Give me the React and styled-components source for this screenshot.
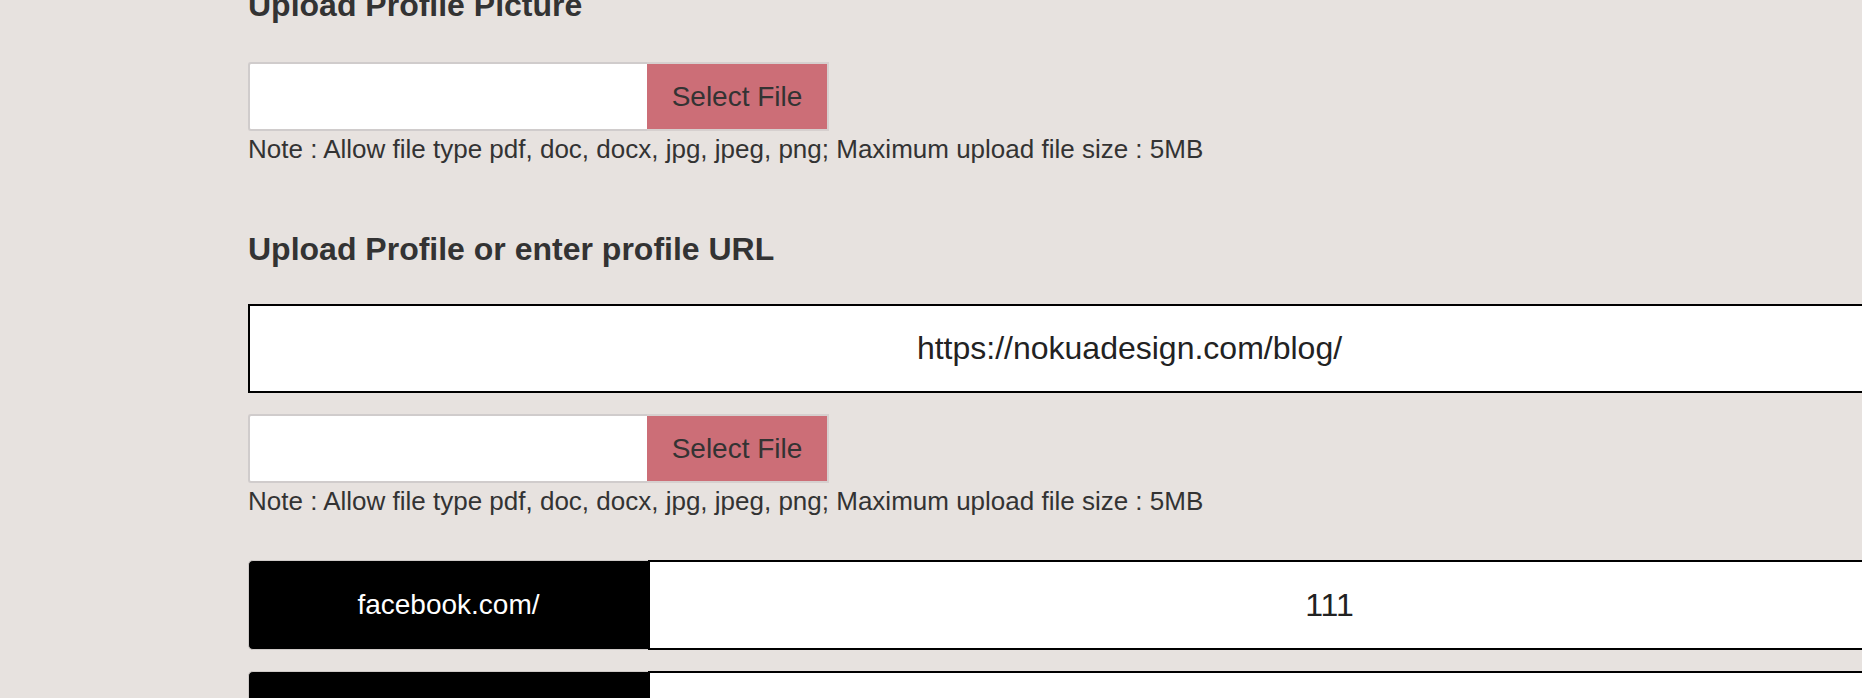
import React from 'react';
import styled, { createGlobalStyle } from 'styled-components';

const GlobalStyle = createGlobalStyle`
  html, body {
    margin: 0;
    padding: 0;
    overflow: hidden;
    background: #e7e2df;
    font-family: "Liberation Sans", Arial, Helvetica, sans-serif;
    color: #333;
  }
`;

const Page = styled.div`
  width: 1763px;
  margin: -15px 0 0 248px;
`;

const Section = styled.section`
  margin-bottom: ${(p) => p.$gap || 0}px;
`;

const Heading = styled.h3`
  margin: 0 0 ${(p) => p.$mb || 37}px;
  font-size: 32px;
  line-height: 40px;
  font-weight: bold;
  color: #333;
`;

const FileRow = styled.div`
  display: flex;
  height: 69px;
`;

const PathBox = styled.input`
  box-sizing: border-box;
  width: 399px;
  height: 100%;
  margin: 0;
  border: 2px solid #d0cccc;
  border-right: none;
  border-radius: 3px 0 0 3px;
  background: #fff;
  outline: none;
`;

const SelectButton = styled.button`
  box-sizing: border-box;
  width: 182px;
  height: 100%;
  margin: 0;
  border: 2px solid #d6d0cf;
  border-left: none;
  background: #cc6e77;
  color: #333;
  font-family: inherit;
  font-size: 28px;
  padding: 0;
`;

const Note = styled.p`
  margin: 3px 0 0;
  font-size: 26px;
  line-height: 30px;
  color: #333;
`;

const UrlInput = styled.input`
  box-sizing: border-box;
  display: block;
  width: 100%;
  height: 89px;
  margin: 0 0 21px;
  border: 2px solid #000;
  background: #fff;
  text-align: center;
  font-family: inherit;
  font-size: 32px;
  color: #222;
  outline: none;
`;

const SocialList = styled.div`
  display: flex;
  flex-direction: column;
  gap: 21px;
`;

const SocialRow = styled.div`
  display: flex;
  height: 90px;
`;

const SocialLabel = styled.div`
  box-sizing: border-box;
  flex: 0 0 400px;
  display: flex;
  align-items: center;
  justify-content: center;
  background: #000;
  color: #fff;
  font-size: 28px;
  border: 1px solid #cfcac8;
  border-right: none;
  border-radius: 5px 0 0 5px;
`;

const SocialInput = styled.input`
  box-sizing: border-box;
  flex: 1;
  height: 100%;
  margin: 0;
  border: 2px solid #000;
  background: #fff;
  text-align: center;
  font-family: inherit;
  font-size: 32px;
  color: #222;
  outline: none;
`;

const NOTE = 'Note : Allow file type pdf, doc, docx, jpg, jpeg, png; Maximum upload file size : 5MB';

const FileField = () => (
  <>
    <FileRow>
      <PathBox type="text" readOnly />
      <SelectButton type="button">Select File</SelectButton>
    </FileRow>
    <Note>{NOTE}</Note>
  </>
);

const socials = [
  { site: 'facebook.com/', value: '111' },
  { site: 'twitter.com/', value: '' },
];

export default function App() {
  return (
    <>
      <GlobalStyle />
      <Page>
        <Section $gap={65}>
          <Heading>Upload Profile Picture</Heading>
          <FileField />
        </Section>
        <Section $gap={44}>
          <Heading $mb={35}>Upload Profile or enter profile URL</Heading>
          <UrlInput type="text" defaultValue="https://nokuadesign.com/blog/" />
          <FileField />
        </Section>
        <SocialList>
          {socials.map((s) => (
            <SocialRow key={s.site}>
              <SocialLabel>{s.site}</SocialLabel>
              <SocialInput type="text" defaultValue={s.value} />
            </SocialRow>
          ))}
        </SocialList>
      </Page>
    </>
  );
}
